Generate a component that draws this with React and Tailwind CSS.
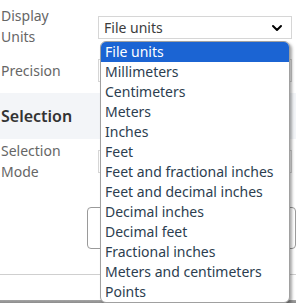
import React from 'react';
import { ChevronDown } from 'lucide-react';

const units = [
  'File units',
  'Millimeters',
  'Centimeters',
  'Meters',
  'Inches',
  'Feet',
  'Feet and fractional inches',
  'Feet and decimal inches',
  'Decimal inches',
  'Decimal feet',
  'Fractional inches',
  'Meters and centimeters',
  'Points',
];

// value is left empty for selects that sit under the open list
const SelectBox = ({ value = '', className = '' }) => (
  <div
    className={`flex h-[23px] w-[194px] items-center justify-between border border-[#d6d6d6] bg-white pl-[5px] pr-[6px] text-[14px] text-[#3c3c3c] ${className}`}
  >
    <span>{value}</span>
    <ChevronDown size={16} strokeWidth={3} className="text-black" />
  </div>
);

export default function App() {
  return (
    <div
      className="relative h-[303px] w-[296px] overflow-hidden bg-white"
      style={{ fontFamily: '"Noto Sans", "Open Sans", sans-serif' }}
    >
      <div className="flex flex-col">
        {/* Display units */}
        <div className="flex items-start pt-[5px]">
          <div className="w-[98px] pl-[1px] text-[14px] leading-[21px] text-[#666]">
            Display
            <br />
            Units
          </div>
          <SelectBox value="File units" className="mt-[11px]" />
        </div>

        {/* Precision */}
        <div className="mt-[8px] flex h-[30px] items-center">
          <div className="w-[98px] pl-[1px] text-[14px] text-[#666]">Precision</div>
          <SelectBox />
        </div>

        {/* Section header */}
        <div className="mt-[8px] flex h-[46px] items-center bg-[#f3f5f8] pl-[1px] text-[16px] font-semibold text-[#333]">
          Selection
        </div>

        {/* Selection mode */}
        <div className="flex items-start pt-[1px]">
          <div className="w-[98px] pl-[1px] text-[14px] leading-[21px] text-[#666]">
            Selection
            <br />
            Mode
          </div>
          <SelectBox className="mt-[10px]" />
        </div>

        {/* Button */}
        <div className="mt-[25px] flex pl-[87px]">
          <div className="h-[42px] w-[212px] rounded-[4px] border border-[#9a9a9a] bg-white" />
        </div>

        <div className="mt-[25px] h-px w-full bg-[#cfcfcf]" />
      </div>

      {/* bottom edge */}
      <div className="absolute bottom-0 left-0 h-[3px] w-full bg-gradient-to-b from-[#a5a5a5] to-[#8c8c8c]" />

      {/* Open dropdown list */}
      <div className="absolute left-[100px] top-[41px] w-[190px] overflow-hidden rounded-[6px] border border-[#a0a0a0] bg-white shadow-[2px_2px_3px_rgba(0,0,0,0.35)]">
        {units.map((u, i) => (
          <div
            key={u}
            className={`flex h-[20px] items-center pl-[4px] text-[14px] leading-none ${
              i === 0 ? 'bg-[#1b64d3] text-white' : 'text-[#2c3e50]'
            }`}
          >
            {u}
          </div>
        ))}
      </div>
    </div>
  );
}
